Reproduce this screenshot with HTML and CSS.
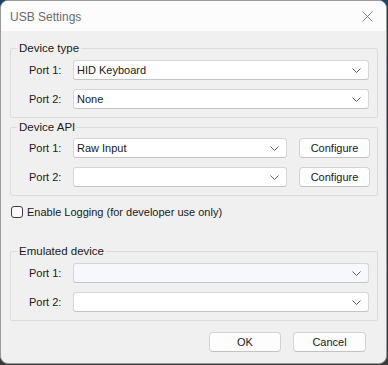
FILE: index.html
```html
<!DOCTYPE html>
<html lang="en">
  <head>
    <meta charset="UTF-8" />
    <meta name="viewport" content="width=device-width, initial-scale=1.0" />
    <title>USB Settings</title>
    <link rel="stylesheet" href="styles.css">
  </head>
  <body>
    <div class="window">
      <div class="titlebar">
        <span class="title">USB Settings</span>
        <svg class="close" width="11" height="11" viewBox="0 0 11 11">
          <path d="M0.5 0.5 L10.5 10.5 M10.5 0.5 L0.5 10.5" stroke="#7a7a7a" stroke-width="0.9" fill="none" />
        </svg>
      </div>

      <div class="content">
        <fieldset class="group">
          <legend>Device type</legend>
          <div class="row">
            <span class="label">Port 1:</span>
            <div class="combo">
              <span class="value">HID Keyboard</span>
              <svg class="chevron" width="9" height="5" viewBox="0 0 9 5"><path d="M0.5 0.5 L4.5 4.5 L8.5 0.5" stroke="#606060" fill="none" /></svg>
            </div>
          </div>
          <div class="row">
            <span class="label">Port 2:</span>
            <div class="combo">
              <span class="value">None</span>
              <svg class="chevron" width="9" height="5" viewBox="0 0 9 5"><path d="M0.5 0.5 L4.5 4.5 L8.5 0.5" stroke="#606060" fill="none" /></svg>
            </div>
          </div>
        </fieldset>

        <fieldset class="group group-api">
          <legend>Device API</legend>
          <div class="row">
            <span class="label">Port 1:</span>
            <div class="combo">
              <span class="value">Raw Input</span>
              <svg class="chevron" width="9" height="5" viewBox="0 0 9 5"><path d="M0.5 0.5 L4.5 4.5 L8.5 0.5" stroke="#606060" fill="none" /></svg>
            </div>
            <button class="btn btn-configure">Configure</button>
          </div>
          <div class="row">
            <span class="label">Port 2:</span>
            <div class="combo">
              <span class="value"></span>
              <svg class="chevron" width="9" height="5" viewBox="0 0 9 5"><path d="M0.5 0.5 L4.5 4.5 L8.5 0.5" stroke="#606060" fill="none" /></svg>
            </div>
            <button class="btn btn-configure">Configure</button>
          </div>
        </fieldset>

        <label class="check">
          <span class="box"></span>
          Enable Logging (for developer use only)
        </label>

        <fieldset class="group group-emulated">
          <legend>Emulated device</legend>
          <div class="row">
            <span class="label">Port 1:</span>
            <div class="combo combo-hover">
              <span class="value"></span>
              <svg class="chevron" width="9" height="5" viewBox="0 0 9 5"><path d="M0.5 0.5 L4.5 4.5 L8.5 0.5" stroke="#606060" fill="none" /></svg>
            </div>
          </div>
          <div class="row">
            <span class="label">Port 2:</span>
            <div class="combo">
              <span class="value"></span>
              <svg class="chevron" width="9" height="5" viewBox="0 0 9 5"><path d="M0.5 0.5 L4.5 4.5 L8.5 0.5" stroke="#606060" fill="none" /></svg>
            </div>
          </div>
        </fieldset>

        <div class="actions">
          <button class="btn btn-action">OK</button>
          <button class="btn btn-action">Cancel</button>
        </div>
      </div>
    </div>
  </body>
</html>
```

FILE: styles.css
```css
html,
body {
  margin: 0;
  height: 365px;
}
body {
  font-family: "Liberation Sans", Arial, sans-serif;
  font-size: 11px;
  color: #1a1a1a;
  background: linear-gradient(#1d3f6b 0%, #2c3645 40%, #3a3a3a 100%);
  overflow: hidden;
}
.window {
  box-sizing: border-box;
  width: 387px;
  height: 364px;
  background-color: #f0f0f0;
  border: 1px solid #9a9a9a;
  border-radius: 8px;
  overflow: hidden;
}
.titlebar {
  height: 30px;
  background-color: #fcfcfc;
  display: flex;
  align-items: center;
  justify-content: space-between;
  padding: 0 13px 0 9px;
}
.title {
  font-size: 12px;
  color: #6b6b6b;
  padding-top: 1px;
}
.close {
  display: block;
}
.content {
  padding: 9px 8px 0 9px;
}
.group {
  margin: 0;
  padding: 4px 8px 8px 18px;
  border: 1px solid #dcdcdc;
  border-radius: 2px;
  display: flex;
  flex-direction: column;
  gap: 9px;
}
.group legend {
  margin-left: -12px;
  padding: 0 2px;
  line-height: 16px;
  font-size: 11.5px;
}
.group-api {
  margin-top: 1px;
  padding-top: 3px;
  padding-right: 7px;
}
.group-emulated {
  margin-top: 23px;
}
.row {
  display: flex;
  align-items: center;
}
.label {
  width: 44px;
  flex: none;
}
.combo {
  flex: 1;
  box-sizing: border-box;
  height: 20px;
  background-color: #ffffff;
  border: 1px solid #d6d6d6;
  border-bottom-color: #c4c4c4;
  border-radius: 3px;
  display: flex;
  align-items: center;
  justify-content: space-between;
  padding: 0 7px 0 3px;
}
.combo-hover {
  background-color: #f6f8fb;
}
.chevron {
  display: block;
}
.btn {
  box-sizing: border-box;
  height: 20px;
  font-family: inherit;
  font-size: 11px;
  color: #1a1a1a;
  background-color: #fdfdfd;
  border: 1px solid #d3d3d3;
  border-bottom-color: #c2c2c2;
  border-radius: 4px;
  padding: 0;
}
.btn-configure {
  width: 71px;
  margin-left: 12px;
  flex: none;
}
.check {
  display: flex;
  align-items: center;
  gap: 4px;
  height: 16px;
  margin-top: 8px;
  padding-left: 1px;
}
.box {
  box-sizing: border-box;
  width: 12px;
  height: 12px;
  border: 1px solid #3c3c3c;
  border-radius: 3px;
  background-color: #fafafa;
}
.actions {
  display: flex;
  justify-content: flex-end;
  gap: 12px;
  margin-top: 11px;
  padding-right: 12px;
}
.btn-action {
  width: 72px;
}
.btn-action + .btn-action {
  width: 73px;
}
```
